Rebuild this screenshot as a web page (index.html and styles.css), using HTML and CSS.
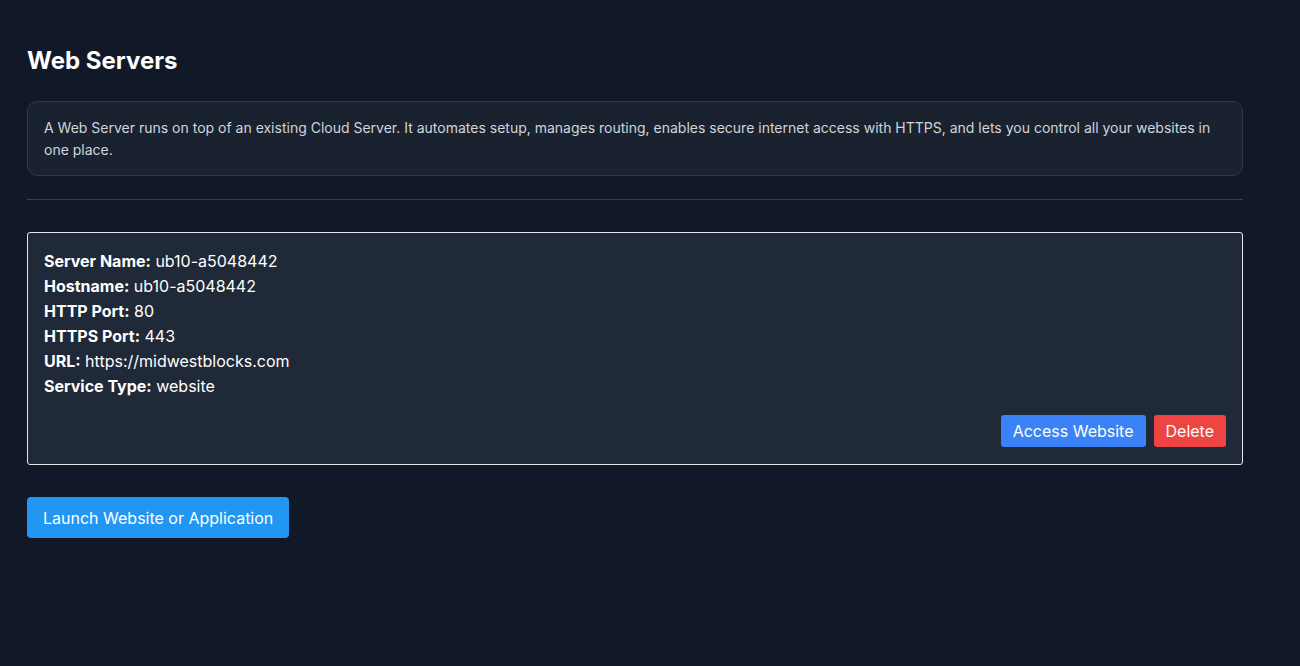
FILE: index.html
```html
<!DOCTYPE html>
<html lang="en">
<head>
    <meta charset="UTF-8">
    <meta name="viewport" content="width=device-width, initial-scale=1.0">
    <title>Web Servers</title>
    <link rel="stylesheet" href="styles.css">
</head>
<body>
    <div class="page">
        <h1>Web Servers</h1>

        <div class="info-box">
            A Web Server runs on top of an existing Cloud Server. It automates setup, manages routing, enables secure internet access with HTTPS, and lets you control all your websites in one place.
        </div>

        <hr class="divider">

        <div class="server-card">
            <p><strong>Server Name:</strong> ub10-a5048442</p>
            <p><strong>Hostname:</strong> ub10-a5048442</p>
            <p><strong>HTTP Port:</strong> 80</p>
            <p><strong>HTTPS Port:</strong> 443</p>
            <p><strong>URL:</strong> https://midwestblocks.com</p>
            <p><strong>Service Type:</strong> website</p>
            <div class="card-actions">
                <button class="btn btn-access">Access Website</button>
                <button class="btn btn-delete">Delete</button>
            </div>
        </div>

        <button class="btn btn-launch">Launch Website or Application</button>
    </div>
</body>
</html>
```

FILE: styles.css
```css
body {
    font-family: Inter, "Noto Sans", sans-serif;
    background-color: #111827;
    color: #ffffff;
    margin: 0;
}
.page {
    width: 1216px;
    padding: 27px;
}
h1 {
    font-size: 24px;
    font-weight: 700;
    margin: 19px 0 25px;
    line-height: 30px;
}
.info-box {
    background-color: #1a2230;
    border: 1px solid #2f3846;
    border-radius: 10px;
    padding: 15px 16px 14px;
    font-size: 14px;
    line-height: 22px;
    color: #d1d5db;
}
.divider {
    border: none;
    border-top: 1px solid #374151;
    margin: 23px 0 32px;
}
.server-card {
    background-color: #1f2937;
    border: 1px solid #e5e7eb;
    border-radius: 3px;
    padding: 16px 16px 17px;
    font-size: 16px;
}
.server-card p {
    margin: 0;
    line-height: 25px;
}
.card-actions {
    display: flex;
    justify-content: flex-end;
    gap: 8px;
    margin-top: 16px;
}
.btn {
    font-family: Inter, "Noto Sans", sans-serif;
    color: #ffffff;
    border: none;
    cursor: pointer;
}
.btn-access, .btn-delete {
    font-size: 16px;
    height: 32px;
    padding: 0 12px;
    border-radius: 3px;
}
.btn-access {
    background-color: #3b82f6;
}
.btn-delete {
    background-color: #ef4444;
}
.btn-launch {
    margin-top: 32px;
    height: 41px;
    padding: 0 16px;
    font-size: 16px;
    border-radius: 4px;
    background-color: #2196f3;
}
```
